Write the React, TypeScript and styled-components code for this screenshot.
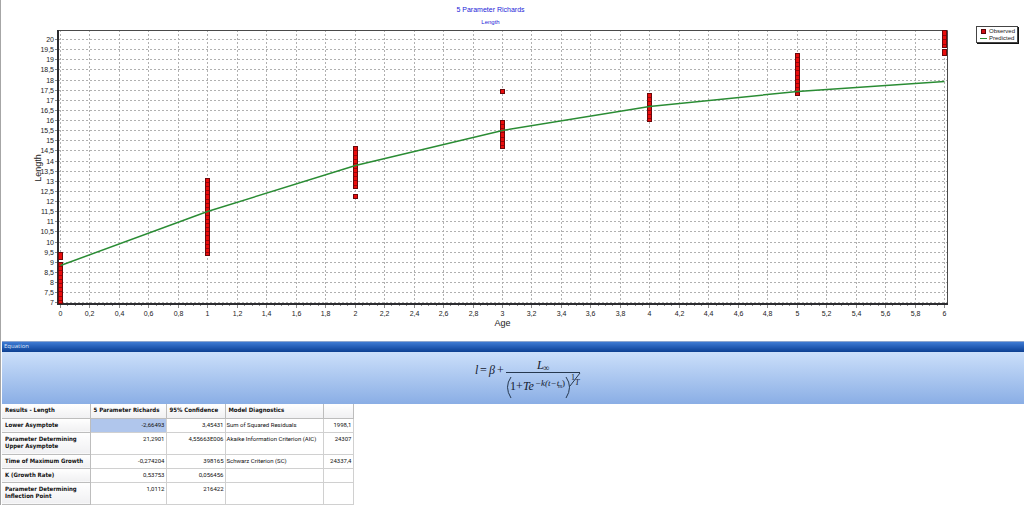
import React from "react";
import styled, { createGlobalStyle } from "styled-components";

const GlobalStyle = createGlobalStyle`
  * { box-sizing: border-box; }
  body { margin: 0; background: #fff; font-family: "Liberation Sans", Arial, sans-serif; }
`;

const Page = styled.main`
  border-left: 1px solid #a6a6a6;
  padding-left: 1px;
`;

const ChartPanel = styled.section`
  padding-top: 6px;
`;

const Titles = styled.header`
  display: flex;
  flex-direction: column;
  align-items: center;
  padding-right: 45px;
  color: #2424d8;
`;

const Title = styled.h1`
  margin: 0;
  font-size: 7px;
  line-height: 8px;
  font-weight: 400;
`;

const Subtitle = styled.p`
  margin: 0;
  padding-top: 4px;
  font-size: 6px;
  line-height: 8px;
`;

const ChartRow = styled.div`
  display: flex;
  align-items: flex-start;
  padding-bottom: 13px;
`;

const Plot = styled.svg`
  flex: 1;
  min-width: 0;
  display: block;
  font-family: "Liberation Sans", Arial, sans-serif;
`;

const TickText = styled.text`
  font-size: 7px;
  fill: #222;
`;

const AxisTitle = styled.text`
  font-size: 9px;
  fill: #222;
`;

const Legend = styled.ul`
  list-style: none;
  width: 42px;
  margin: 0 6px 0 22px;
  padding: 1px 0 0 3px;
  border: 1px solid #444;
  box-shadow: 1px 1px 0 #111;
  font-size: 6px;
  line-height: 7px;
  color: #222;
`;

const LegendItem = styled.li`
  display: flex;
  align-items: center;
  gap: 2px;
`;

const EquationTitle = styled.h2`
  margin: 0;
  padding-left: 2px;
  height: 11px;
  border-top: 1px solid #8ea6cf;
  background: linear-gradient(#3f7bd3, #1f57b0 60%, #0d3f90);
  color: #dfe9fa;
  font: 400 6px/8px "Open Sans", sans-serif;
`;

const EquationBody = styled.div`
  display: flex;
  justify-content: center;
  padding: 3px 0 0 29px;
  height: 52px;
  background: linear-gradient(#cbdffa, #8aaee5);
`;

const Formula = styled.svg`
  width: 108px;
  height: 44px;
  font-family: "Liberation Serif", "Times New Roman", serif;
  font-style: italic;
  fill: #14202f;
`;

const Results = styled.section`
  border-bottom: 2px solid #c3d3e3;
`;

const Table = styled.table`
  width: 351px;
  border-collapse: collapse;
  table-layout: fixed;
  font: 6px/7px Roboto, sans-serif;
  color: #111;
`;

const Column = styled.col<{ $width: number }>`
  width: ${(p) => p.$width}px;
`;

const Row = styled.tr<{ $tall?: boolean }>`
  height: ${(p) => (p.$tall ? 22 : 14)}px;
`;

const HeadCell = styled.th`
  padding: 2px 2px 0 3px;
  border: 1px solid #bdbdbd;
  border-top: 0;
  border-left: 0;
  background: linear-gradient(#fff, #f0f0f2);
  font-family: "DejaVu Sans Condensed", "DejaVu Sans", sans-serif;
  font-stretch: condensed;
  text-align: left;
  vertical-align: top;
  white-space: nowrap;
`;

const Cell = styled.td<{ $selected?: boolean; $text?: boolean }>`
  padding: 2px 1px 0;
  border: 1px solid #d0d0d0;
  border-left: 0;
  background: ${(p) => (p.$selected ? "#b0c6ec" : "#fff")};
  text-align: ${(p) => (p.$text ? "left" : "right")};
  vertical-align: top;
  white-space: nowrap;
`;

/* Chart geometry */
const WIDTH = 952;
const HEIGHT = 302;
const LEFT = 56;
const TOP = 4;
const RIGHT = 945;
const BOTTOM = 278;
const xAt = (age: number) => Math.round(58 + age * 147.33) + 0.5;
const yAt = (length: number) => Math.round(13 + (20 - length) * 20.25) + 0.5;
const label = (n: number) => String(n).replace(".", ",");

const ages = Array.from({ length: 31 }, (_, i) => i / 5);
const minorAges = Array.from({ length: 121 }, (_, i) => i / 20);
const lengths = Array.from({ length: 27 }, (_, i) => 7 + i / 2);

/* age, top and bottom of each run of overlapping observations */
const observed: [number, number, number][] = [
  [0, 226, 234], [0, 236, 278],
  [1, 152, 230],
  [2, 120, 163], [2, 168, 173],
  [3, 63, 68], [3, 94, 123],
  [4, 67, 96],
  [5, 27, 70],
  [6, 4, 22], [6, 23, 30],
];

const predicted = [239, 185, 139, 104, 80, 65, 55];

function Observations({ age, top, bottom }: { age: number; top: number; bottom: number }) {
  const x = xAt(age) - 2.5;
  const bars = Math.max(1, Math.floor((bottom - top - 1) / 4));
  const step = (bottom - top) / bars;
  return (
    <g>
      <rect x={x + 0.5} y={top + 0.5} width="4" height={bottom - top - 1} fill="#ea0c0c" stroke="#6a080b" />
      {Array.from({ length: bars - 1 }, (_, i) => (
        <path key={i} d={`M${x + 1} ${Math.round(top + (i + 1) * step) + 0.5}h3`} stroke="#9a060a" />
      ))}
    </g>
  );
}

function Chart() {
  return (
    <Plot viewBox={`0 0 ${WIDTH} ${HEIGHT}`} role="img" aria-label="Length by age">
      <g stroke="#b0b0b0" strokeDasharray="2 2">
        {lengths.map((v) => <path key={v} d={`M${LEFT} ${yAt(v)}H${RIGHT}`} />)}
        {ages.map((v) => <path key={v} d={`M${xAt(v)} ${TOP}V${BOTTOM}`} />)}
      </g>
      <g stroke="#8a8a8a">
        {minorAges.map((v) => <path key={v} d={`M${xAt(v)} ${BOTTOM}v2`} />)}
        {ages.map((v) => <path key={v} d={`M${xAt(v)} ${BOTTOM}v4`} />)}
        {lengths.map((v) => <path key={v} d={`M${LEFT - 3} ${yAt(v)}h3`} />)}
      </g>
      <path d={`M${LEFT} ${TOP + 0.5}H${RIGHT + 0.5}V${BOTTOM}`} fill="none" stroke="#4a4a4a" />
      <path d={`M${LEFT} ${TOP}V${BOTTOM}H${RIGHT + 1}`} fill="none" stroke="#2c2c30" strokeWidth="2" />
      {observed.map(([age, top, bottom]) => (
        <Observations key={`${age}-${top}`} age={age} top={top} bottom={bottom} />
      ))}
      <polyline
        points={predicted.map((y, age) => `${xAt(age)},${y + 0.5}`).join(" ")}
        fill="none" stroke="#2a8c34" strokeWidth="1.5"
      />
      {lengths.map((v) => (
        <TickText key={v} x={LEFT - 4} y={yAt(v) + 2.5} textAnchor="end">{label(v)}</TickText>
      ))}
      {ages.map((v) => (
        <TickText key={v} x={xAt(v)} y={BOTTOM + 12} textAnchor="middle">{label(v)}</TickText>
      ))}
      <AxisTitle x={xAt(3)} y={HEIGHT - 2} textAnchor="middle">Age</AxisTitle>
      <AxisTitle transform="translate(39 142) rotate(-90)" textAnchor="middle">Length</AxisTitle>
    </Plot>
  );
}

function Equation() {
  return (
    <Formula viewBox="0 0 108 44" role="img" aria-label="Richards growth equation">
      <text x="1" y="19" fontSize="12">l</text>
      <text x="6" y="19" fontSize="12" fontStyle="normal">=</text>
      <text x="15" y="19" fontSize="12">β</text>
      <text x="23" y="19" fontSize="12" fontStyle="normal">+</text>
      <text x="63" y="14" fontSize="12">L</text>
      <text x="69" y="16" fontSize="9" fontStyle="normal">∞</text>
      <path d="M32 17.5H106" stroke="#26384f" />
      <path d="M37 22Q30 32 37 43M92 22Q99 32 92 43" fill="none" stroke="#26384f" />
      <text x="36" y="35" fontSize="12" fontStyle="normal">1+</text>
      <text x="49" y="35" fontSize="12">Te</text>
      <text x="61" y="31" fontSize="9">−k(t−t</text>
      <text x="84" y="33" fontSize="6">m</text>
      <text x="88" y="31" fontSize="9" fontStyle="normal">)</text>
      <text x="97" y="25" fontSize="8" fontStyle="normal">1</text>
      <path d="M96 31L106 18" stroke="#26384f" />
      <text x="101" y="30" fontSize="8">T</text>
    </Formula>
  );
}

type Result = {
  name: React.ReactNode; value: string; confidence: string;
  diagnostic?: string; score?: string; tall?: boolean;
};

const results: Result[] = [
  { name: "Lower Asymptote", value: "-2,66493", confidence: "3,45431", diagnostic: "Sum of Squared Residuals", score: "1998,1" },
  { name: <>Parameter Determining<br />Upper Asymptote</>, value: "21,2901", confidence: "4,55663E006", diagnostic: "Akaike Information Criterion (AIC)", score: "24307", tall: true },
  { name: "Time of Maximum Growth", value: "-0,274204", confidence: "398165", diagnostic: "Schwarz Criterion (SC)", score: "24337,4" },
  { name: "K (Growth Rate)", value: "0,53753", confidence: "0,056456" },
  { name: <>Parameter Determining<br />Inflection Point</>, value: "1,0112", confidence: "216422", tall: true },
];

export default function App() {
  return (
    <Page>
      <GlobalStyle />
      <ChartPanel>
        <Titles>
          <Title>5 Parameter Richards</Title>
          <Subtitle>Length</Subtitle>
        </Titles>
        <ChartRow>
          <Chart />
          <Legend>
            <LegendItem>
              <svg width="7" height="6"><rect x="1.5" y="0.5" width="4" height="4" fill="#d01014" stroke="#5a0508" /></svg>
              Observed
            </LegendItem>
            <LegendItem>
              <svg width="7" height="6"><path d="M0 2.5h7" stroke="#2a8c34" /></svg>
              Predicted
            </LegendItem>
          </Legend>
        </ChartRow>
      </ChartPanel>
      <section>
        <EquationTitle>Equation</EquationTitle>
        <EquationBody><Equation /></EquationBody>
      </section>
      <Results>
        <Table>
          <colgroup>
            <Column $width={88} />
            <Column $width={76} />
            <Column $width={59} />
            <Column $width={98} />
            <Column $width={30} />
          </colgroup>
          <thead>
            <Row>
              <HeadCell>Results - Length</HeadCell>
              <HeadCell>5 Parameter Richards</HeadCell>
              <HeadCell>95% Confidence</HeadCell>
              <HeadCell>Model Diagnostics</HeadCell>
              <HeadCell />
            </Row>
          </thead>
          <tbody>
            {results.map((r, i) => (
              <Row key={i} $tall={r.tall}>
                <HeadCell scope="row">{r.name}</HeadCell>
                <Cell $selected={i === 0}>{r.value}</Cell>
                <Cell>{r.confidence}</Cell>
                <Cell $text>{r.diagnostic}</Cell>
                <Cell>{r.score}</Cell>
              </Row>
            ))}
          </tbody>
        </Table>
      </Results>
    </Page>
  );
}
